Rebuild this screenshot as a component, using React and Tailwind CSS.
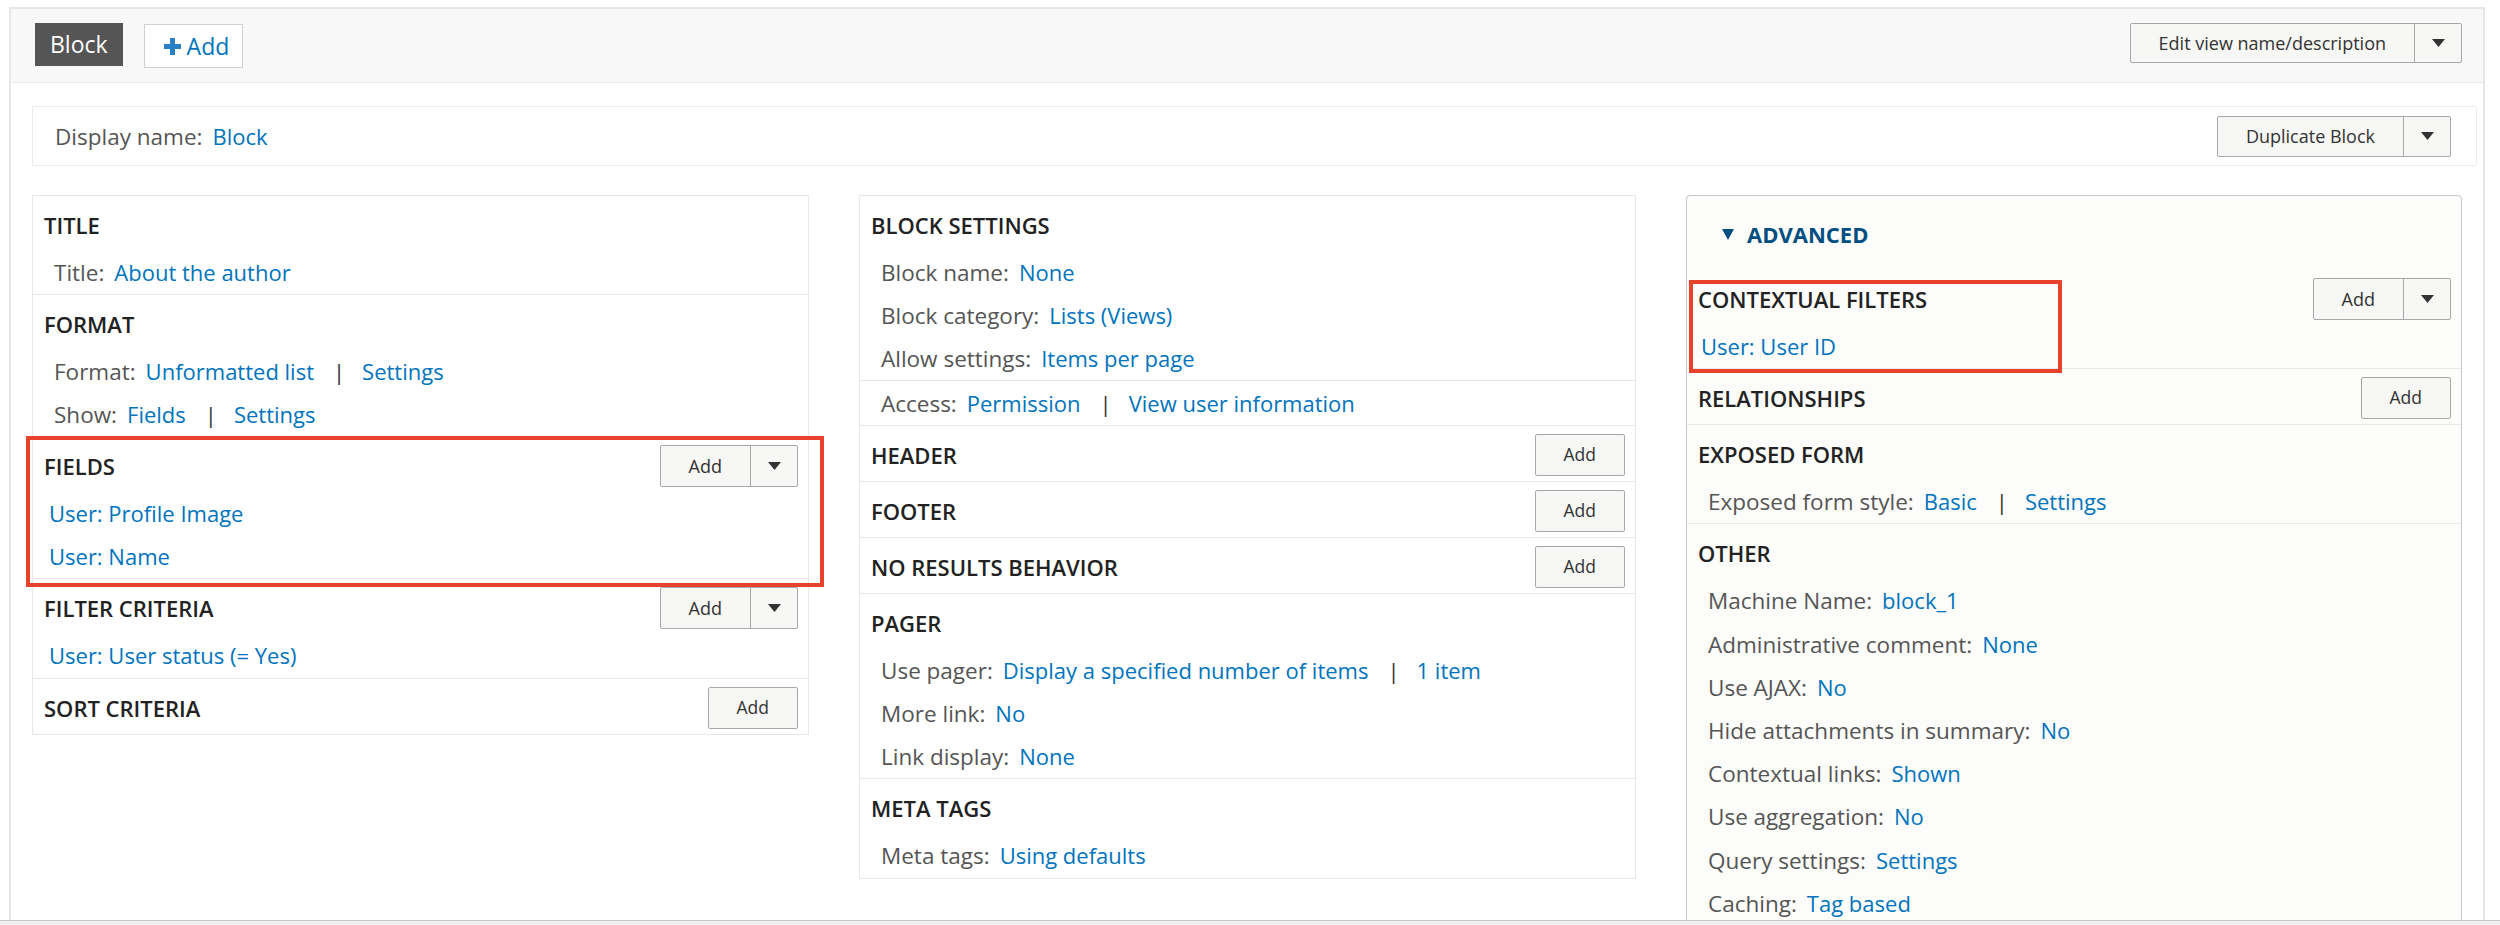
import React from "react";

const FONT = "font-['Open_Sans','Liberation_Sans',sans-serif]";

function Tri({ className = "fill-[#333]" }) {
  return (
    <svg width="13" height="8" viewBox="0 0 13 8" className={className}>
      <path d="M0 0 L13 0 L6.5 8 Z" />
    </svg>
  );
}

function SplitButton({ label, h = "h-[42px]" }) {
  return (
    <div className={`flex ${h} border border-[#a8a8a8] bg-[#f7f7f5] rounded-[2px] text-[18px] text-[#333] leading-none shrink-0`}>
      <span className="flex items-center px-[28px] whitespace-nowrap">{label}</span>
      <span className="w-[47px] flex items-center justify-center border-l border-[#a8a8a8]">
        <Tri />
      </span>
    </div>
  );
}

function AddButton() {
  return (
    <div className="flex h-[42px] items-center border border-[#a8a8a8] bg-[#f7f7f5] rounded-[2px] px-[28px] text-[17.5px] text-[#333] leading-none shrink-0">
      Add
    </div>
  );
}

function Row({ label, values, pl = "pl-[10px]" }) {
  return (
    <div className={`leading-[43.2px] h-[43.2px] whitespace-nowrap ${pl}`}>
      {label && <span className="text-[#555] text-[22.5px]">{label}</span>}
      {values.map((v, i) => (
        <React.Fragment key={i}>
          {i > 0 && <span className="text-[#333] ml-[19px] mr-[17px]">|</span>}
          <span className={`text-[#0074bd] ${i === 0 && label ? "ml-[10px]" : ""}`}>{v}</span>
        </React.Fragment>
      ))}
    </div>
  );
}

function Section({ title, button, rows = [], itemPl = "pl-[5px]", first, overlay }) {
  const hasRows = rows.length > 0;
  return (
    <div className={`relative ${first ? "" : "border-t border-[#e8e8e8]"} pl-[11px] pr-[10px] ${hasRows ? "" : "pb-[5px]"}`}>
      {title && (
        <div className="flex items-center justify-between pt-[8px] min-h-[50px]">
          <h3 className="my-[6px] leading-[30px] font-semibold text-[#222] whitespace-nowrap">{title}</h3>
          {button === "split" && <SplitButton label="Add" />}
          {button === "single" && <AddButton />}
        </div>
      )}
      {hasRows && (
        <div className={title ? "mt-[5px]" : "pt-[0.5px]"}>
          {rows.map((r, i) =>
            r.item ? (
              <Row key={i} values={[r.item]} pl={itemPl} />
            ) : (
              <Row key={i} label={r.label} values={r.values} />
            )
          )}
        </div>
      )}
      {overlay}
    </div>
  );
}

function RedBox({ className }) {
  return <div className={`absolute border-[4px] border-[#e6432d] z-10 pointer-events-none ${className}`} />;
}

function Column({ children }) {
  return <div className="border border-[#e8e8e8] bg-white self-start">{children}</div>;
}

export default function App() {
  return (
    <div className={`${FONT} relative h-[925px] w-[2500px] overflow-hidden bg-white text-[22px]`}>
      <div className="h-[925px] pt-[7px] pl-[9px] pr-[15px]">
        <div className="flex h-full flex-col border-2 border-b-0 border-[#e6e6e6]">
          {/* header */}
          <div className="flex h-[74px] shrink-0 items-start justify-between border-b border-[#ececec] bg-[#f8f8f8] pl-[24px] pr-[21px] pt-[14px]">
            <div className="flex items-start gap-[21px]">
              <div className="flex h-[43px] items-center bg-[#555] px-[15px] text-[23px] text-white">Block</div>
              <div className="mt-[1px] flex h-[44px] items-center border border-[#cfcfcf] bg-white pl-[19px] pr-[13px] text-[23px] text-[#0074bd]">
                <svg width="17" height="17" viewBox="0 0 17 17" className="mr-[6px] fill-[#2a7fc5]">
                  <path d="M6 0h5v6h6v5h-6v6H6v-6H0V6h6z" />
                </svg>
                Add
              </div>
            </div>
            <SplitButton label="Edit view name/description" h="h-[40px]" />
          </div>

          {/* body */}
          <div className="flex-1 pl-[21px] pr-[6px] pt-[23px]">
            <div className="flex h-[60px] items-center justify-between border border-[#ececec] bg-white pl-[22px] pr-[25px]">
              <div className="leading-[30px] whitespace-nowrap">
                <span className="text-[#555] text-[22.5px]">Display name:</span>
                <span className="ml-[10px] text-[#0074bd]">Block</span>
              </div>
              <SplitButton label="Duplicate Block" h="h-[41px]" />
            </div>

            <div className="mt-[28.5px] grid grid-cols-[777px_777px_776px] gap-x-[50px] items-start">
              {/* left column */}
              <Column>
                <Section first title="TITLE" rows={[{ label: "Title:", values: ["About the author"] }]} />
                <Section
                  title="FORMAT"
                  rows={[
                    { label: "Format:", values: ["Unformatted list", "Settings"] },
                    { label: "Show:", values: ["Fields", "Settings"] },
                  ]}
                />
                <Section
                  title="FIELDS"
                  button="split"
                  rows={[{ item: "User: Profile Image" }, { item: "User: Name" }]}
                  overlay={<RedBox className="-top-[1px] -bottom-[9px] -left-[7px] -right-[16px]" />}
                />
                <Section title="FILTER CRITERIA" button="split" rows={[{ item: "User: User status (= Yes)" }]} />
                <Section title="SORT CRITERIA" button="single" />
              </Column>

              {/* middle column */}
              <Column>
                <Section
                  first
                  title="BLOCK SETTINGS"
                  rows={[
                    { label: "Block name:", values: ["None"] },
                    { label: "Block category:", values: ["Lists (Views)"] },
                    { label: "Allow settings:", values: ["Items per page"] },
                  ]}
                />
                <Section rows={[{ label: "Access:", values: ["Permission", "View user information"] }]} />
                <Section title="HEADER" button="single" />
                <Section title="FOOTER" button="single" />
                <Section title="NO RESULTS BEHAVIOR" button="single" />
                <Section
                  title="PAGER"
                  rows={[
                    { label: "Use pager:", values: ["Display a specified number of items", "1 item"] },
                    { label: "More link:", values: ["No"] },
                    { label: "Link display:", values: ["None"] },
                  ]}
                />
                <Section title="META TAGS" rows={[{ label: "Meta tags:", values: ["Using defaults"] }]} />
              </Column>

              {/* right column: advanced */}
              <div className="rounded-t-[4px] border border-[#c8c8c8] bg-[#fcfcfa]">
                <div className="flex items-center pl-[35px] pt-[23.5px] pb-[21px] leading-[30px]">
                  <svg width="12" height="11" viewBox="0 0 12 11" className="mr-[13px] fill-[#004f80]">
                    <path d="M0 0 L12 0 L6 11 Z" />
                  </svg>
                  <span className="font-bold text-[#004f80] text-[22px]">ADVANCED</span>
                </div>
                <Section
                  first
                  title="CONTEXTUAL FILTERS"
                  button="split"
                  itemPl="pl-[3px]"
                  rows={[{ item: "User: User ID" }]}
                  overlay={<RedBox className="top-[9.5px] left-[2px] w-[373px] h-[93px]" />}
                />
                <Section title="RELATIONSHIPS" button="single" />
                <Section title="EXPOSED FORM" rows={[{ label: "Exposed form style:", values: ["Basic", "Settings"] }]} />
                <Section
                  title="OTHER"
                  rows={[
                    { label: "Machine Name:", values: ["block_1"] },
                    { label: "Administrative comment:", values: ["None"] },
                    { label: "Use AJAX:", values: ["No"] },
                    { label: "Hide attachments in summary:", values: ["No"] },
                    { label: "Contextual links:", values: ["Shown"] },
                    { label: "Use aggregation:", values: ["No"] },
                    { label: "Query settings:", values: ["Settings"] },
                    { label: "Caching:", values: ["Tag based"] },
                  ]}
                />
              </div>
            </div>
          </div>
        </div>
      </div>
      <div className="absolute inset-x-0 bottom-0 z-20 h-[5px] border-t border-[#c8c8c8] bg-[#f0f0f0]" />
    </div>
  );
}
